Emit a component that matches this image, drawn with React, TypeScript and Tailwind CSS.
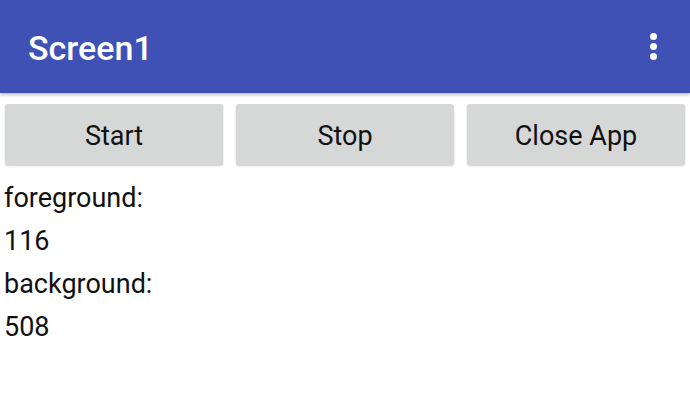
const buttons = ['Start', 'Stop', 'Close App'];

const rows = ['foreground:', '116', 'background:', '508'];

export default function App() {
  return (
    <div className="h-[394px] w-[690px] overflow-hidden bg-white" style={{ fontFamily: 'Roboto, "Noto Sans", sans-serif' }}>
      <header className="relative z-10 flex h-[93px] items-center justify-between bg-[#3f51b5] pl-[28px] pr-[33px] shadow-[0_2px_3px_rgba(0,0,0,0.25)]">
        <h1 className="pt-[2px] text-[34px] font-medium leading-none text-white">Screen1</h1>
        <div className="flex flex-col items-center gap-[3px]">
          <span className="h-[7px] w-[7px] rounded-full bg-white" />
          <span className="h-[7px] w-[7px] rounded-full bg-white" />
          <span className="h-[7px] w-[7px] rounded-full bg-white" />
        </div>
      </header>

      <div className="flex gap-[13px] px-[5px] pt-[11px]">
        {buttons.map((b) => (
          <button
            key={b}
            className="flex h-[61px] flex-1 items-center justify-center rounded-[3px] bg-[#d6d7d7] pt-[4px] text-[27px] text-[#111] shadow-[0_1px_2px_rgba(0,0,0,0.2)]"
          >
            {b}
          </button>
        ))}
      </div>

      <div className="pl-[4px] pt-[12px]">
        {rows.map((r) => (
          <div key={r} className="text-[27px] leading-[43px] text-[#111]">
            {r}
          </div>
        ))}
      </div>
    </div>
  );
}
